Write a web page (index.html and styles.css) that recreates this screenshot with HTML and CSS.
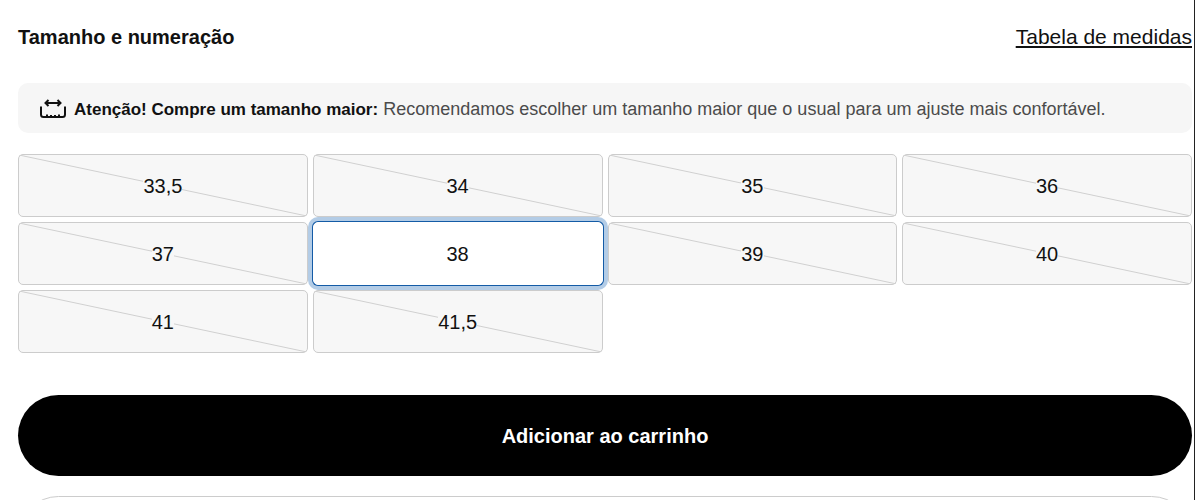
FILE: index.html
```html
<!DOCTYPE html>
<html lang="pt-BR">
<head>
<meta charset="utf-8">
<meta name="viewport" content="width=device-width, initial-scale=1">
<title>Tamanho e numeração</title>
<link rel="stylesheet" href="styles.css">
</head>
<body>
<main class="product">
  <header class="product__header">
    <h2 class="product__title" id="size-title">Tamanho e numeração</h2>
    <a class="product__guide" href="#medidas">Tabela de medidas</a>
  </header>
  <div class="notice">
    <svg class="notice__icon" viewBox="0 0 26 20" aria-hidden="true">
      <path d="M1 6.500V14.500Q1 17 3.500 17H22.500Q25 17 25 14.500V6.500M7 17V14.500M11 17V15M15 17V15M19 17V14.500M5.500 3H20.500M8.500 0L5.500 3L8.500 6M17.500 0L20.500 3L17.500 6"/>
    </svg>
    <p class="notice__text"><strong class="notice__lead">Atenção! Compre um tamanho maior:</strong> Recomendamos escolher um tamanho maior que o usual para um ajuste mais confortável.</p>
  </div>
  <form class="form">
    <div class="sizes" role="radiogroup" aria-labelledby="size-title">
      <label class="size"><input class="size__input" type="radio" name="size" disabled><svg class="size__strike" viewBox="0 0 100 100" preserveAspectRatio="none" aria-hidden="true"><path d="M0 0L100 100"/></svg><span class="size__label">33,5</span></label>
      <label class="size"><input class="size__input" type="radio" name="size" disabled><svg class="size__strike" viewBox="0 0 100 100" preserveAspectRatio="none" aria-hidden="true"><path d="M0 0L100 100"/></svg><span class="size__label">34</span></label>
      <label class="size"><input class="size__input" type="radio" name="size" disabled><svg class="size__strike" viewBox="0 0 100 100" preserveAspectRatio="none" aria-hidden="true"><path d="M0 0L100 100"/></svg><span class="size__label">35</span></label>
      <label class="size"><input class="size__input" type="radio" name="size" disabled><svg class="size__strike" viewBox="0 0 100 100" preserveAspectRatio="none" aria-hidden="true"><path d="M0 0L100 100"/></svg><span class="size__label">36</span></label>
      <label class="size"><input class="size__input" type="radio" name="size" disabled><svg class="size__strike" viewBox="0 0 100 100" preserveAspectRatio="none" aria-hidden="true"><path d="M0 0L100 100"/></svg><span class="size__label">37</span></label>
      <label class="size size--selected"><input class="size__input" type="radio" name="size" checked><span class="size__label">38</span></label>
      <label class="size"><input class="size__input" type="radio" name="size" disabled><svg class="size__strike" viewBox="0 0 100 100" preserveAspectRatio="none" aria-hidden="true"><path d="M0 0L100 100"/></svg><span class="size__label">39</span></label>
      <label class="size"><input class="size__input" type="radio" name="size" disabled><svg class="size__strike" viewBox="0 0 100 100" preserveAspectRatio="none" aria-hidden="true"><path d="M0 0L100 100"/></svg><span class="size__label">40</span></label>
      <label class="size"><input class="size__input" type="radio" name="size" disabled><svg class="size__strike" viewBox="0 0 100 100" preserveAspectRatio="none" aria-hidden="true"><path d="M0 0L100 100"/></svg><span class="size__label">41</span></label>
      <label class="size"><input class="size__input" type="radio" name="size" disabled><svg class="size__strike" viewBox="0 0 100 100" preserveAspectRatio="none" aria-hidden="true"><path d="M0 0L100 100"/></svg><span class="size__label">41,5</span></label>
    </div>
    <button class="button button--primary" type="button">Adicionar ao carrinho</button>
    <button class="button button--outline" type="button" aria-label="Favoritar"></button>
  </form>
</main>
</body>
</html>
```
FILE: styles.css
```css
* {
  box-sizing: border-box;
}

body {
  margin: 0;
  min-height: 100vh;
  border-right: 1px solid #222;
  background: #fff;
  color: #111;
  font-family: "Liberation Sans", Arial, sans-serif;
  font-size: 20px;
  line-height: 24px;
}

.product {
  padding: 25px 2px 20px 18px;
}

.product__header {
  display: flex;
  justify-content: space-between;
  align-items: center;
}

.product__title {
  margin: 0;
  font-size: 20px;
  font-weight: 700;
}

.product__guide {
  color: #111;
  font-size: 21px;
  text-underline-offset: 2px;
}

.notice {
  display: flex;
  align-items: center;
  gap: 8px;
  margin-top: 34px;
  padding: 14px 22px 11px;
  border-radius: 10px;
  background: #f6f6f6;
}

.notice__icon {
  flex: none;
  width: 26px;
  height: 20px;
  overflow: visible;
  fill: none;
  stroke: #111;
  stroke-width: 2;
}

.notice__text {
  margin: 0;
  color: #4b4b4b;
  font-size: 18px;
}

.notice__lead {
  color: #111;
  font-size: 17px;
  font-weight: 700;
}

.form {
  display: grid;
}

.sizes {
  display: grid;
  grid-template-columns: repeat(4, 1fr);
  gap: 5px;
  margin-top: 21px;
}

.size {
  position: relative;
  display: flex;
  align-items: center;
  justify-content: center;
  height: 63px;
  border: 1px solid #ccc;
  border-radius: 5px;
  background: #f7f7f7;
}

.size__input {
  position: absolute;
  inset: 0;
  width: 100%;
  height: 100%;
  margin: 0;
  opacity: 0;
}

.size__strike {
  position: absolute;
  inset: 0;
  width: 100%;
  height: 100%;
  stroke: #d0d0d0;
}

.size__strike path {
  vector-effect: non-scaling-stroke;
}

.size__label {
  position: relative;
  background: inherit;
}

.size--selected {
  z-index: 1;
  border-color: #fff;
  background: #fff;
  box-shadow: 0 0 0 1px #145ba6, 0 0 0 5px #b3cce6;
}

.button {
  height: 81px;
  border: 0;
  border-radius: 41px;
  font: inherit;
}

.button--primary {
  margin-top: 42px;
  background: #000;
  color: #fff;
  font-weight: 700;
}

.button--outline {
  margin-top: 20px;
  border: 1px solid #ccc;
  background: #fff;
}
```
